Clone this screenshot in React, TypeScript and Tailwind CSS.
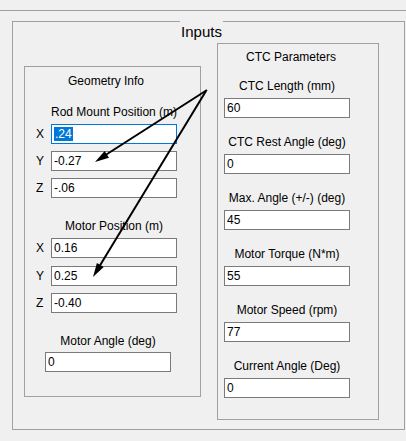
import React from 'react'

const font = { fontFamily: '"Liberation Sans", Arial, sans-serif' }

function Field({ value, focused }: { value: string; focused?: boolean }) {
  return (
    <div
      className={
        'flex h-[20px] w-[126px] items-center bg-white pl-[2px] text-[12px] leading-[14px] text-black border ' +
        (focused ? 'border-[#0078d7]' : 'border-[#7a7a7a]')
      }
    >
      {focused ? <span className="bg-[#0078d7] px-px text-white">{value}</span> : value}
    </div>
  )
}

function Label({ children, className = '' }: { children: React.ReactNode; className?: string }) {
  return (
    <div className={'w-[126px] whitespace-nowrap text-center text-[12px] leading-[14px] text-black ' + className}>
      {children}
    </div>
  )
}

function AxisRow({ axis, value, focused, className = '' }: { axis: string; value: string; focused?: boolean; className?: string }) {
  return (
    <div className={'ml-[11px] flex items-center ' + className}>
      <span className="w-[15px] text-[12px] leading-[14px] text-black">{axis}</span>
      <Field value={value} focused={focused} />
    </div>
  )
}

function GeometryBox() {
  return (
    <div className="ml-[11px] mt-[44px] flex h-[331px] w-[177px] shrink-0 flex-col border border-[#a0a0a0]">
      <Label className="mt-[7px] ml-[18px]">Geometry Info</Label>
      <Label className="mt-[17px] ml-[26px]">Rod Mount Position (m)</Label>
      <AxisRow axis="X" value=".24" focused className="mt-[5px]" />
      <AxisRow axis="Y" value="-0.27" className="mt-[7px]" />
      <AxisRow axis="Z" value="-.06" className="mt-[7px]" />
      <Label className="mt-[21px] ml-[26px]">Motor Position (m)</Label>
      <AxisRow axis="X" value="0.16" className="mt-[5px]" />
      <AxisRow axis="Y" value="0.25" className="mt-[8px]" />
      <AxisRow axis="Z" value="-0.40" className="mt-[7px]" />
      <Label className="mt-[21px] ml-[20px]">Motor Angle (deg)</Label>
      <div className="mt-[4px] ml-[20px]">
        <Field value="0" />
      </div>
    </div>
  )
}

const ctcFields = [
  { label: 'CTC Length (mm)', value: '60' },
  { label: 'CTC Rest Angle (deg)', value: '0' },
  { label: 'Max. Angle (+/-) (deg)', value: '45' },
  { label: 'Motor Torque (N*m)', value: '55' },
  { label: 'Motor Speed (rpm)', value: '77' },
  { label: 'Current Angle (Deg)', value: '0' },
]

function CtcBox() {
  return (
    <div className="ml-[16px] mt-[21px] flex h-[377px] w-[162px] shrink-0 flex-col border border-[#a0a0a0]">
      <Label className="mt-[6px] ml-[10px]">CTC Parameters</Label>
      {ctcFields.map((f, i) => (
        <div key={i} className={'ml-[6px] flex flex-col ' + (i === 0 ? 'mt-[15px]' : 'mt-[17px]')}>
          <Label>{f.label}</Label>
          <div className="mt-[5px]">
            <Field value={f.value} />
          </div>
        </div>
      ))}
    </div>
  )
}

function Arrows() {
  return (
    <svg className="pointer-events-none absolute left-0 top-0" width="406" height="441" viewBox="0 0 406 441">
      <line x1="207" y1="90" x2="104" y2="156" stroke="black" strokeWidth="2" />
      <polygon points="95,162 109,157.8 104.6,151" fill="black" />
      <line x1="206" y1="91" x2="99" y2="267" stroke="black" strokeWidth="2" />
      <polygon points="93,277 103.7,267.1 96.9,263" fill="black" />
    </svg>
  )
}

export default function App() {
  return (
    <div className="relative h-[441px] w-[406px] overflow-hidden bg-[#f0f0f0] pt-[10px]" style={font}>
      <div className="h-px w-full bg-[#a0a0a0]" />
      <div className="relative ml-[12px] mt-[10px] flex h-[409px] w-[393px] border border-[#a0a0a0]">
        <div className="absolute left-[167px] top-[-1px] flex h-[18px] w-[43px] items-end justify-center bg-[#f0f0f0] text-[15px] leading-[15px] text-black">
          Inputs
        </div>
        <GeometryBox />
        <CtcBox />
      </div>
      <Arrows />
    </div>
  )
}
